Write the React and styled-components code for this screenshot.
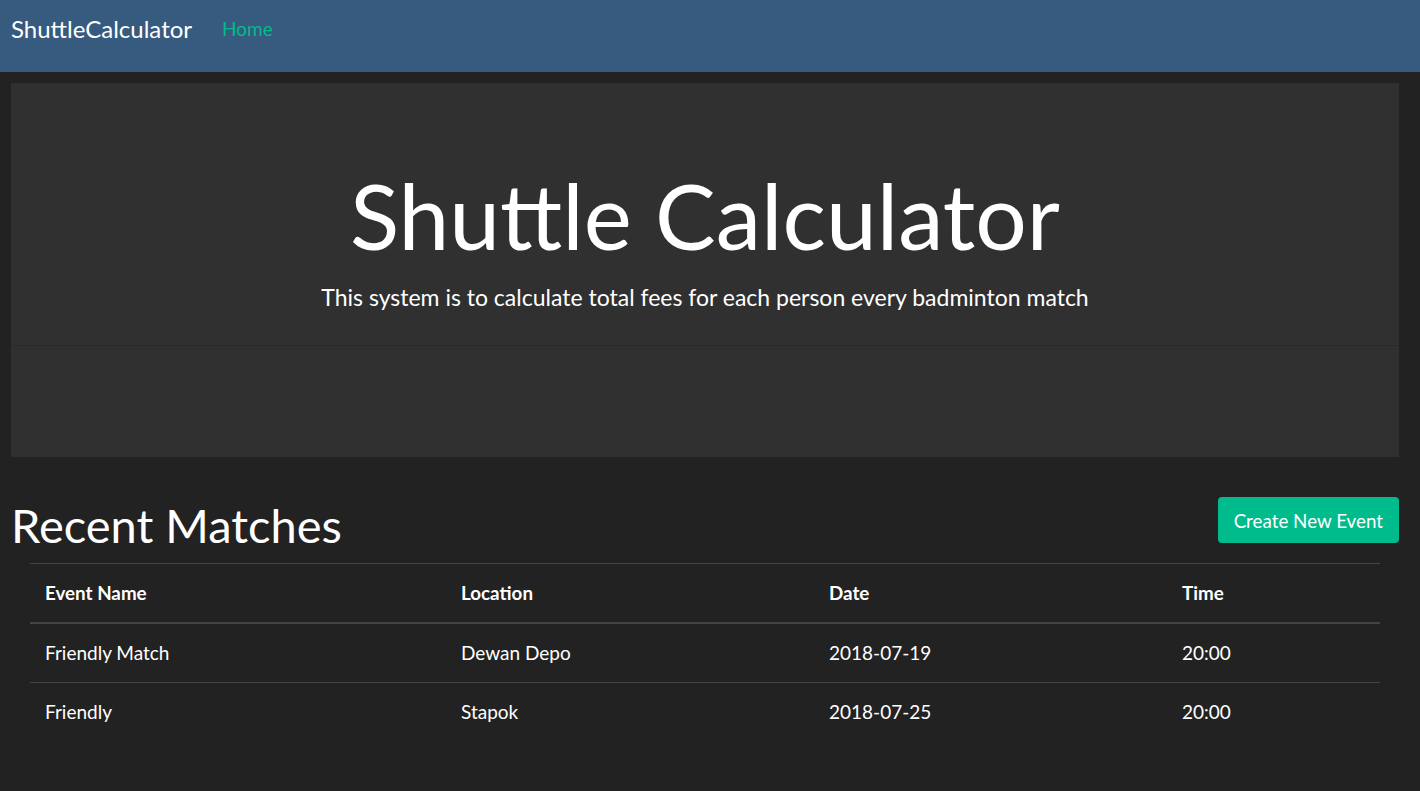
import React from 'react';
import styled, { createGlobalStyle } from 'styled-components';

const GlobalStyle = createGlobalStyle`
  html, body {
    margin: 0;
    padding: 0;
    background: #222222;
    color: #ffffff;
    font-family: Lato, "Noto Sans", "Liberation Sans", sans-serif;
    font-size: 16px;
  }
`;

const matches = [
  { name: 'Friendly Match', location: 'Dewan Depo', date: '2018-07-19', time: '20:00' },
  { name: 'Friendly', location: 'Stapok', date: '2018-07-25', time: '20:00' },
];

export default function App() {
  return (
    <>
      <GlobalStyle />
      <Navbar>
        <Brand>ShuttleCalculator</Brand>
        <NavLink>Home</NavLink>
      </Navbar>
      <Main>
        <Jumbotron>
          <HeroTop>
            <HeroTitle>Shuttle Calculator</HeroTitle>
            <Lead>This system is to calculate total fees for each person every badminton match</Lead>
          </HeroTop>
        </Jumbotron>
        <SectionHeader>
          <SectionTitle>Recent Matches</SectionTitle>
          <CreateButton>Create New Event</CreateButton>
        </SectionHeader>
        <Table>
          <colgroup>
            <col style={{ width: 416 }} />
            <col style={{ width: 368 }} />
            <col style={{ width: 353 }} />
            <col />
          </colgroup>
          <thead>
            <tr>
              <Th>Event Name</Th>
              <Th>Location</Th>
              <Th>Date</Th>
              <Th>Time</Th>
            </tr>
          </thead>
          <tbody>
            {matches.map((m) => (
              <tr key={m.name + m.date}>
                <Td>{m.name}</Td>
                <Td>{m.location}</Td>
                <Td>{m.date}</Td>
                <Td>{m.time}</Td>
              </tr>
            ))}
          </tbody>
        </Table>
      </Main>
    </>
  );
}

const Navbar = styled.nav`
  height: 72px;
  background: #375a7f;
  display: flex;
  align-items: flex-start;
  padding: 0 11px;
  box-sizing: border-box;
`;

const Brand = styled.a`
  font-size: 24px;
  line-height: 58px;
  color: #ffffff;
  margin-right: 30px;
`;

const NavLink = styled.a`
  font-size: 19px;
  line-height: 58px;
  color: #00bc8c;
`;

const Main = styled.main`
  padding: 11px 21px 40px 11px;
`;

const Jumbotron = styled.section`
  background: #303030;
  height: 374px;
  box-sizing: border-box;
`;

const HeroTop = styled.div`
  height: 263px;
  border-bottom: 1px solid #2a2a2a;
  display: flex;
  flex-direction: column;
  align-items: center;
  padding-top: 86px;
  box-sizing: border-box;
`;

const HeroTitle = styled.h1`
  margin: 0;
  font-size: 91px;
  font-weight: 400;
  line-height: 1;
`;

const Lead = styled.p`
  margin: 20px 0 0;
  font-size: 23px;
  line-height: 1.5;
`;

const SectionHeader = styled.div`
  display: flex;
  justify-content: space-between;
  align-items: flex-start;
  margin-top: 40px;
`;

const SectionTitle = styled.h2`
  margin: 0;
  font-size: 47px;
  font-weight: 400;
  line-height: 1.2;
`;

const CreateButton = styled.button`
  background: #00bc8c;
  color: #ffffff;
  border: none;
  border-radius: 4px;
  font-family: inherit;
  font-size: 18.8px;
  height: 46px;
  padding: 0 16px;
  cursor: pointer;
`;

const Table = styled.table`
  margin: 10px 19px 0;
  width: calc(100% - 38px);
  border-collapse: collapse;
  table-layout: fixed;
`;

const Th = styled.th`
  text-align: left;
  font-weight: 700;
  font-size: 18.8px;
  padding: 17px 15px;
  line-height: 24px;
  border-top: 1px solid #444444;
  border-bottom: 2px solid #444444;
`;

const Td = styled.td`
  font-size: 19px;
  padding: 17px 15px;
  line-height: 24px;
  border-top: 1px solid #444444;
`;
